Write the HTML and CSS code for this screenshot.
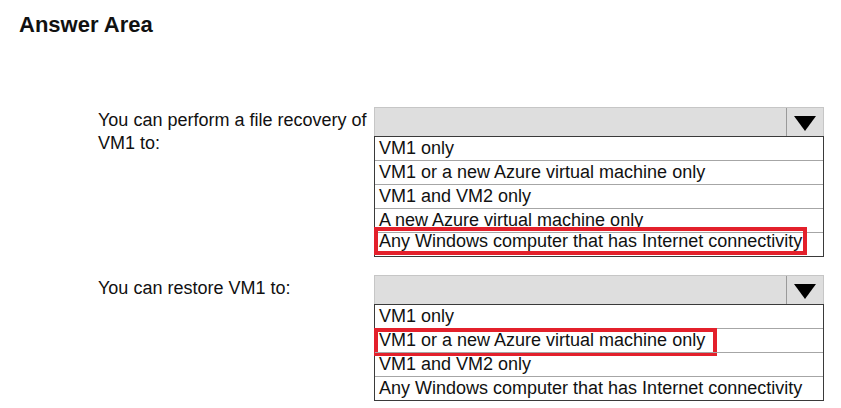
FILE: index.html
```html
<!DOCTYPE html>
<html lang="en">
<head>
<meta charset="utf-8">
<title>Answer Area</title>
<link rel="stylesheet" href="styles.css">
</head>
<body>
<div class="page">
  <h1 class="title">Answer Area</h1>
  <div class="questions">
    <div class="question q1">
      <div class="label">You can perform a file recovery of<br>VM1 to:</div>
      <div class="dropdown">
        <div class="select">
          <div class="select-value"></div>
          <div class="select-arrow">
            <svg width="22" height="15" viewBox="0 0 22 15"><polygon points="0,0 22,0 11,15" fill="#000"/></svg>
          </div>
        </div>
        <ul class="options">
          <li class="option">VM1 only</li>
          <li class="option">VM1 or a new Azure virtual machine only</li>
          <li class="option">VM1 and VM2 only</li>
          <li class="option">A new Azure virtual machine only</li>
          <li class="option option-raised">Any Windows computer that has Internet connectivity<span class="mark mark-a"></span></li>
        </ul>
      </div>
    </div>
    <div class="question q2">
      <div class="label">You can restore VM1 to:</div>
      <div class="dropdown">
        <div class="select">
          <div class="select-value"></div>
          <div class="select-arrow">
            <svg width="22" height="15" viewBox="0 0 22 15"><polygon points="0,0 22,0 11,15" fill="#000"/></svg>
          </div>
        </div>
        <ul class="options">
          <li class="option">VM1 only</li>
          <li class="option">VM1 or a new Azure virtual machine only<span class="mark mark-b"></span></li>
          <li class="option">VM1 and VM2 only</li>
          <li class="option">Any Windows computer that has Internet connectivity</li>
        </ul>
      </div>
    </div>
  </div>
</div>
</body>
</html>
```
FILE: styles.css
```css
* { box-sizing: border-box; }
html, body {
  margin: 0;
  padding: 0;
  background: #fff;
}
body {
  font-family: "Liberation Sans", Arial, sans-serif;
  color: #111;
}
.page {
  width: 841px;
  height: 408px;
  overflow: hidden;
  padding: 12px 0 0 19px;
}
.title {
  margin: 0;
  font-size: 22px;
  line-height: 26px;
  font-weight: bold;
  color: #111;
}
.questions {
  margin-top: 69px;
  padding-left: 79px;
  display: flex;
  flex-direction: column;
  gap: 18px;
}
.question {
  display: grid;
  grid-template-columns: 276px 450px;
}
.label {
  font-size: 18px;
  line-height: 23px;
  padding-top: 2px;
}
.dropdown {
  display: flex;
  flex-direction: column;
}
.select {
  height: 29px;
  display: flex;
  background: #dedede;
  border: 1px solid #c6c6c6;
  border-bottom: none;
}
.select-value {
  flex: 1;
}
.select-arrow {
  width: 37px;
  border-left: 1px solid #9a9a9a;
  display: flex;
  align-items: center;
  justify-content: center;
  padding-top: 2px;
}
.options {
  list-style: none;
  margin: 0;
  padding: 0;
  border: 1px solid #3a3a3a;
}
.option {
  position: relative;
  height: 24px;
  line-height: 23px;
  font-size: 18px;
  padding-left: 4px;
  border-top: 1px solid #a6a6a6;
  white-space: nowrap;
}
.option:first-child {
  border-top: none;
  height: 23px;
}
.option-raised {
  line-height: 17px;
}
.mark {
  position: absolute;
  left: -1px;
  border: 4px solid #e3202b;
  pointer-events: none;
}
.mark-a {
  top: -6px;
  width: 433px;
  height: 28px;
}
.mark-b {
  top: -1px;
  width: 343px;
  height: 28px;
}
```
